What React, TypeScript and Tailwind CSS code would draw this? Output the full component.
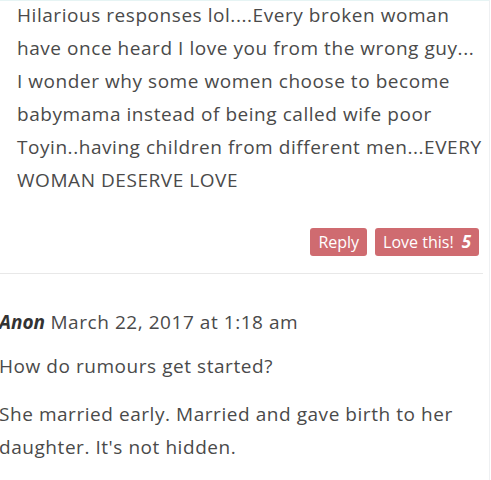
export default function App() {
  return (
    <div
      className="w-[491px] h-[480px] overflow-hidden bg-white text-[#4a4a4a] tracking-[0.55px]"
      style={{ fontFamily: "'Open Sans', Lato, sans-serif" }}
    >
      <div className="w-[490px] border-r border-[#eef0f2] h-full">
        <div className="pl-[17px] pr-[10px] pt-0 border-t border-[#e6f4f4]">
          <p className="text-[19px] leading-[33px] whitespace-nowrap -mt-[2px]">
            Hilarious responses lol....Every broken woman
            <br />
            have once heard I love you from the wrong guy...
            <br />
            I wonder why some women choose to become
            <br />
            babymama instead of being called wife poor
            <br />
            Toyin..having children from different men...EVERY
            <br />
            WOMAN DESERVE LOVE
          </p>
          <div className="flex justify-end gap-2 mt-[31px] pb-[17px] tracking-normal">
            <button className="h-[28px] px-2 rounded-[3px] bg-[#cf6b70] text-white text-[16px]">
              Reply
            </button>
            <button className="h-[28px] px-2 rounded-[3px] bg-[#cf6b70] text-white text-[16px] flex items-center gap-2">
              Love this! <span className="font-bold italic text-[17px]">5</span>
            </button>
          </div>
        </div>
        <div className="border-t border-[#e8e8e8] mr-[6px]" />
        <div className="pt-[32px] -ml-[1px]">
          <p className="text-[19px] leading-[33px] whitespace-nowrap">
            <b className="italic font-bold text-[#333] tracking-normal">Anon</b> March 22, 2017 at 1:18 am
          </p>
          <p className="text-[19px] leading-[33px] mt-[11px] whitespace-nowrap">
            How do rumours get started?
          </p>
          <p className="text-[19px] leading-[33px] mt-[15px] whitespace-nowrap">
            She married early. Married and gave birth to her
            <br />
            daughter. It's not hidden.
          </p>
        </div>
      </div>
    </div>
  );
}
